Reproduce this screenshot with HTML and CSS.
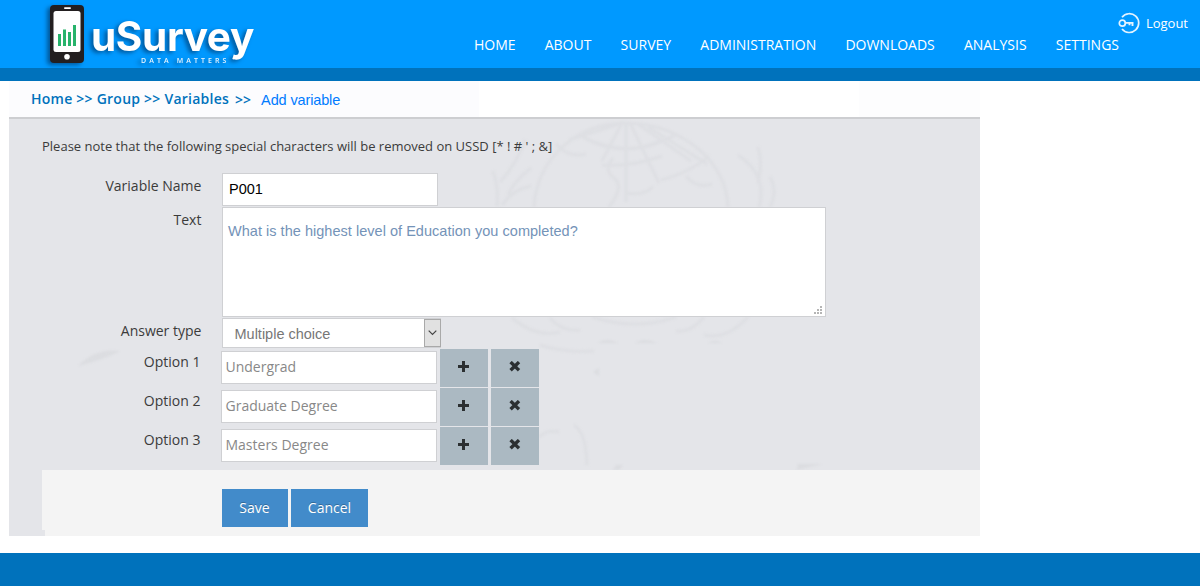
FILE: index.html
```html
<!DOCTYPE html>
<html lang="en">
<head>
<meta charset="utf-8">
<title>uSurvey - Add variable</title>
<link rel="stylesheet" href="styles.css">
</head>
<body>
<svg class="defs" width="0" height="0" aria-hidden="true">
  <symbol id="plus" viewBox="0 0 12 12"><path d="M4 0h3v4h4v3H7v4H4V7H0V4h4z" fill="#2b2f31"/></symbol>
  <symbol id="cross" viewBox="0 0 12 12"><path d="M2.800 2.300l6 5.800M8.800 2.300L2.800 8.100" stroke="#2b2f31" stroke-width="3.400" stroke-linecap="square"/></symbol>
</svg>
<header class="header">
  <div class="logo">
    <svg class="phone" width="44" height="66" viewBox="0 0 44 66">
      <rect x="7" y="5" width="34" height="58" rx="4" fill="#231f20"/>
      <rect x="10.500" y="11" width="27" height="41" rx="2.500" fill="#fff"/>
      <rect x="21" y="7.200" width="7" height="1.800" rx=".9" fill="#fff"/>
      <circle cx="24" cy="56.800" r="2.800" fill="#fff"/>
      <path d="M15 34h3v12h-3zM20 29.500h3V46h-3zM25 32h3v14h-3zM30 25h3v21h-3z" fill="#27b36b"/>
    </svg>
    <div class="brand">
      <span class="brand-name">uSurvey</span>
      <span class="brand-tag">DATA MATTERS</span>
    </div>
  </div>
  <div class="header-right">
    <a class="logout">
      <svg width="22" height="22" viewBox="0 0 22 22" fill="none" stroke="#e3f3ff">
        <path d="M4 5.200A9.400 9.400 0 1 1 4 17" stroke-width="1.700"/>
        <circle cx="4.300" cy="11.200" r="3" stroke-width="1.700"/>
        <path d="M7.500 10.900H15.500M14.500 11v3M11.500 11v2.200" stroke-width="1.900"/>
      </svg>
      <span>Logout</span>
    </a>
    <nav class="nav">
      <a>HOME</a><a>ABOUT</a><a>SURVEY</a><a>ADMINISTRATION</a><a>DOWNLOADS</a><a>ANALYSIS</a><a>SETTINGS</a>
    </nav>
  </div>
</header>
<main class="main">
  <div class="breadcrumb"><span class="trail">Home &gt;&gt; Group &gt;&gt; Variables</span><span class="sep">&gt;&gt;</span><span class="current">Add variable</span></div>
  <form class="panel">
    <svg class="watermark" width="971" height="351" viewBox="9 119 971 351" fill="none" stroke="#dcdde1" stroke-width="3">
      <g opacity=".7">
        <path d="M534 207c3-48 42-84 92-84s100 34 102 84M556 144q12 14 30 10M578 134q47 30 99 0M597 127l26-4M569 140l53-17M626 123v79M622 123l-20 38M630 123l29 60M638 124l53 37M648 127l59 37"/>
        <path d="M594 142q35 14 68-2M602 165q29 2 60-9M613 158q-10 12 1 20t-5 29M626 193q17 3 27-6M661 180q30-8 48-24M686 176q10 13 26 8"/>
        <path d="M493 171q6 18 4 35M500 182q16-17 25-42M508 195q7-15 23-27M502 205q10-15 29-19M738 155q30 20 21 52M758 147q5 16 0 36M770 177q8 14 0 30"/>
        <path d="M512 318q24 20 48 14M550 318q12 14 30 12M592 317q43 14 84 0M704 317q-13 16-28 14M748 317q-21 23-44 18M540 345q24 8 54 6"/>
        <path d="M539 437q8-8 20-5M574 425q12 7 13 40"/>
      </g>
      <g fill="#dadbdf" stroke="none" opacity=".8"><path d="M78 366q18-18 42-15q-17 9-42 15M598 343q8-6 20 0zM635 343q9-6 22 0zM708 343q7-4 14 0zM593 372l6-4v8zM616 465h7l-4 5h-6zM798 464h24l-25 6z"/></g>
    </svg>
    <p class="note">Please note that the following special characters will be removed on USSD [* ! # ' ; &amp;]</p>
    <div class="row row-name"><label>Variable Name</label><div class="field name">P001</div></div>
    <div class="row row-text"><label>Text</label>
      <div class="field area">What is the highest level of Education you completed?
        <svg class="grip" width="9" height="9" viewBox="0 0 9 9" fill="#b5b5b5"><path d="M6 0h2v2H6zM3 3h2v2H3zM6 3h2v2H6zM0 6h2v2H0zM3 6h2v2H3zM6 6h2v2H6z"/></svg>
      </div>
    </div>
    <div class="row row-type"><label>Answer type</label>
      <div class="field select"><span>Multiple choice</span><i class="arrow"><svg width="9" height="6" viewBox="0 0 9 6" fill="none" stroke="#444" stroke-width="1.200"><path d="M.7.700l3.800 3.800L8.300.700"/></svg></i></div>
    </div>
    <div class="row option"><label>Option 1</label><div class="field answer">Undergrad</div><b class="tool"><svg width="12" height="12"><use href="#plus"/></svg></b><b class="tool"><svg width="12" height="12"><use href="#cross"/></svg></b></div>
    <div class="row option"><label>Option 2</label><div class="field answer">Graduate Degree</div><b class="tool"><svg width="12" height="12"><use href="#plus"/></svg></b><b class="tool"><svg width="12" height="12"><use href="#cross"/></svg></b></div>
    <div class="row option"><label>Option 3</label><div class="field answer">Masters Degree</div><b class="tool"><svg width="12" height="12"><use href="#plus"/></svg></b><b class="tool"><svg width="12" height="12"><use href="#cross"/></svg></b></div>
    <div class="actions"><a class="btn save">Save</a><a class="btn cancel">Cancel</a></div>
  </form>
</main>
<footer class="footer"></footer>
</body>
</html>
```

FILE: styles.css
```css
* { box-sizing: border-box; }
body { margin: 0; height: 586px; overflow: hidden; display: flex; flex-direction: column; background: #fff; font: 14px/20px "Open Sans", sans-serif; color: #3b3b3b; }
.defs { position: absolute; }
.header { height: 81px; flex: none; display: flex; justify-content: space-between; background: #0099ff; border-bottom: 13px solid #0072bc; color: #fff; }
.logo { display: flex; height: 68px; padding-left: 43px; filter: drop-shadow(-3px 2px 2px rgba(0, 45, 90, .6)); }
.phone { flex: none; }
.brand { display: flex; flex-direction: column; padding: 17px 0 0 4px; }
.brand-name { font: 700 40.500px/40px Inter, sans-serif; letter-spacing: -.35px; }
.brand-tag { font: 600 7px/8px "Open Sans", sans-serif; letter-spacing: 3.1px; padding-left: 50px; color: #e6f4ff; }
.header-right { display: flex; flex-direction: column; padding-top: 12px; }
.logout { display: flex; gap: 6px; align-self: flex-end; height: 22px; padding-right: 12px; font-size: 13px; line-height: 23px; }
.nav { display: flex; gap: 29.2px; padding-right: 81px; margin-top: 1px; line-height: 20px; }
.main { width: 971px; height: 472px; margin-left: 9px; flex: none; }
.breadcrumb { height: 38px; display: flex; padding: 8px 0 0 22px; border-bottom: 2px solid #cdced1; background: linear-gradient(90deg, #fcfcfe 470px, #fff 470px 850px, #fdfdfe 850px); color: #0072bc; font-weight: 600; }
.trail { letter-spacing: .24px; }
.sep { margin-left: 6px; padding-top: 1px; }
.current { font: 14.500px/22px "Liberation Sans", sans-serif; letter-spacing: -.13px; color: #007bff; margin-left: 10px; }
.panel { position: relative; height: 417px; padding-left: 33px; background: #e4e5e9; }
.watermark { position: absolute; left: 0; top: 0; filter: blur(.8px); }
.note { position: relative; margin: 0; height: 54px; padding-top: 17px; font-size: 13px; }
.row { position: relative; display: flex; }
.row label { width: 159.400px; margin-right: 20.600px; text-align: right; flex: none; }
.field { border: 1px solid #cfd0d3; background: #fff; }
.row-name { height: 34px; }
.row-name label { padding-top: 3px; }
.name { width: 216px; height: 33px; padding-left: 6px; font: 14.500px/30px "Liberation Sans", sans-serif; color: #000; }
.row-text { height: 111px; }
.row-text label { padding-top: 3px; }
.area { position: relative; width: 604px; height: 110px; padding: 13px 5px; font: 14.500px/20px "Liberation Sans", sans-serif; letter-spacing: .03px; color: #7493b8; }
.grip { position: absolute; right: 2px; bottom: 1px; }
.row-type { height: 31px; }
.row-type label { padding-top: 3px; }
.select { display: flex; justify-content: space-between; width: 219px; height: 30px; padding-left: 11.500px; border-right: 0; font: 14.500px/30px "Liberation Sans", sans-serif; color: #777; }
.arrow { display: flex; align-items: center; justify-content: center; width: 17px; height: 28px; background: #e1e1e1; border: 1px solid #a9a9a9; }
.option { height: 39px; }
.option label { width: 158.500px; margin-right: 20.500px; padding-top: 3px; }
.answer { width: 216px; height: 33px; margin-top: 2px; padding-left: 3.500px; line-height: 30px; color: #888; }
.tool { display: flex; justify-content: center; width: 48px; height: 38px; margin-left: 3px; padding-top: 12px; background: #abb9c2; }
.actions { position: relative; display: flex; gap: 3px; height: 66px; margin-top: 4px; padding: 19px 0 0 180px; background: #f4f4f4; }
.actions::after { content: ""; position: absolute; left: 0; bottom: 0; width: 3px; height: 6px; background: #e4e5e9; }
.btn { height: 38px; background: #428bca; color: #fff; text-align: center; line-height: 38px; text-shadow: 0 -1px 0 rgba(0, 0, 0, .25); }
.save { width: 66px; padding-right: 1px; }
.cancel { width: 77px; }
.footer { height: 33px; background: #0072bc; flex: none; }
```
